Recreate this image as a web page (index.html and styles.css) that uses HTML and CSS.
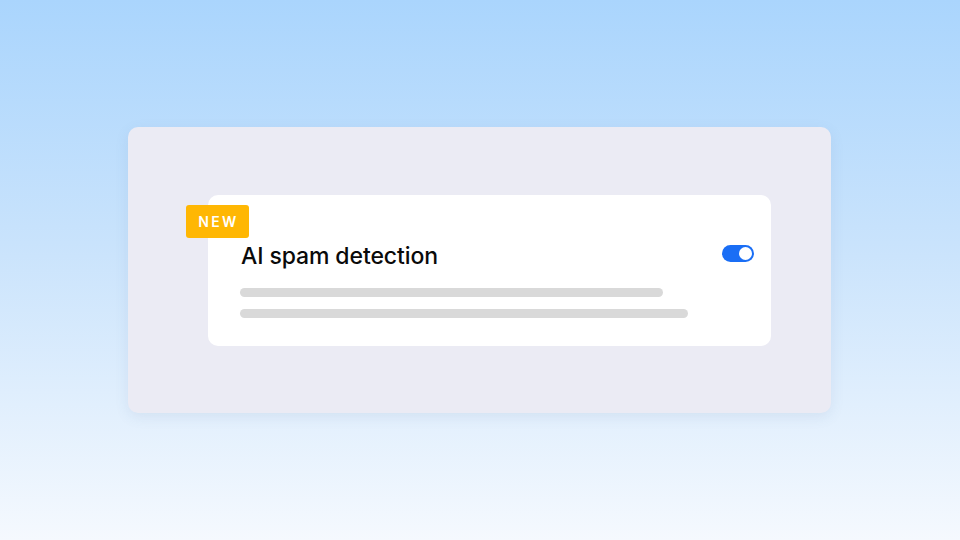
FILE: index.html
```html
<!DOCTYPE html>
<html>
<head>
<meta charset="utf-8">
<link rel="stylesheet" href="styles.css">
</head>
<body>
<div class="stage">
  <div class="panel">
    <div class="card">
      <span class="badge">NEW</span>
      <div class="header">
        <h1 class="title">AI spam detection</h1>
        <span class="toggle"><span class="knob"></span></span>
      </div>
      <div class="bar bar-a"></div>
      <div class="bar bar-b"></div>
    </div>
  </div>
</div>
</body>
</html>
```
FILE: styles.css
```css
* { box-sizing: border-box; }
html, body { margin: 0; padding: 0; }
body {
  width: 960px;
  height: 540px;
  overflow: hidden;
  background: linear-gradient(180deg, #aad5fd 0%, #c9e3fc 45%, #f5f9fe 100%);
  font-family: Inter, "Noto Sans", sans-serif;
}
.stage {
  width: 960px;
  height: 540px;
  display: flex;
  align-items: center;
  justify-content: center;
}
.panel {
  width: 703px;
  height: 286px;
  margin-left: -1px;
  background: #ebebf4;
  border-radius: 10px;
  box-shadow: 0 4px 14px rgba(80, 110, 150, 0.10);
  padding: 68px 60px 0 80px;
}
.card {
  position: relative;
  width: 563px;
  height: 151px;
  background: #ffffff;
  border-radius: 10px;
  padding: 47px 17px 0 32px;
}
.badge {
  position: absolute;
  left: -22px;
  top: 10px;
  width: 63px;
  height: 33px;
  background: #ffb703;
  border-radius: 3px;
  color: #ffffff;
  font-size: 14px;
  font-weight: 600;
  letter-spacing: 2.4px;
  display: flex;
  align-items: center;
  justify-content: center;
  padding-left: 2px;
}
.header {
  display: flex;
  justify-content: space-between;
  align-items: flex-start;
}
.title {
  margin: 0 0 0 1px;
  font-size: 23px;
  line-height: 28px;
  font-weight: 500;
  letter-spacing: -0.1px;
  color: #0a0a0a;
}
.toggle {
  width: 32px;
  height: 17px;
  margin-top: 3px;
  background: #1a6ef5;
  border-radius: 9px;
  display: flex;
  justify-content: flex-end;
  align-items: center;
  padding: 2px;
}
.knob {
  width: 13px;
  height: 13px;
  border-radius: 50%;
  background: #ffffff;
}
.bar {
  height: 9px;
  border-radius: 5px;
  background: #d9d9d9;
}
.bar-a { width: 423px; margin-top: 18px; }
.bar-b { width: 448px; margin-top: 12px; }
```
